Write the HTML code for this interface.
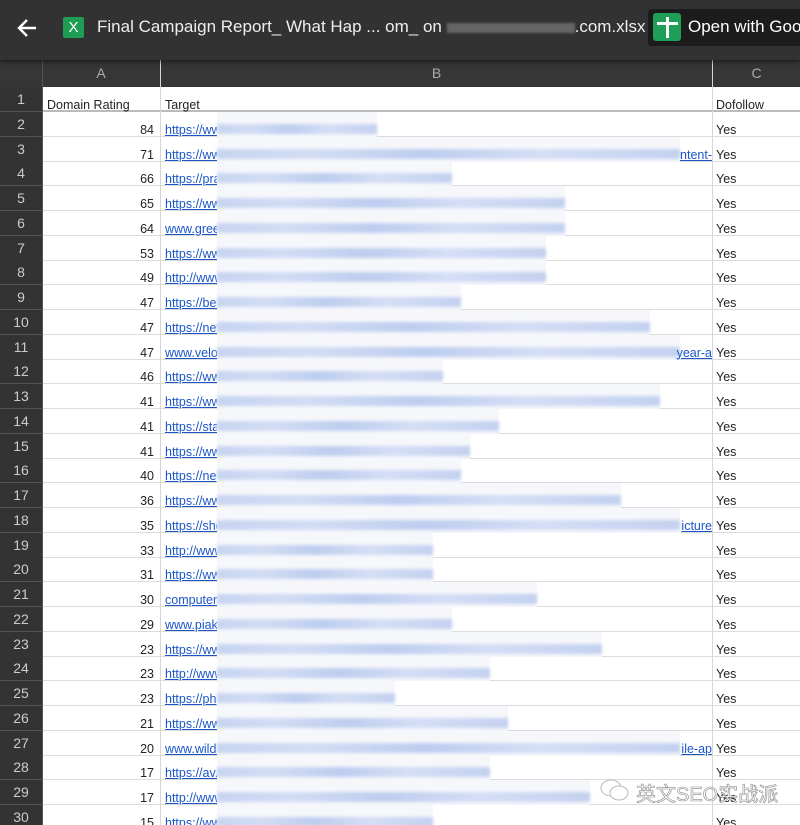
<!DOCTYPE html>
<html><head><meta charset="utf-8"><style>
*{margin:0;padding:0;box-sizing:border-box}
html,body{width:800px;height:825px;overflow:hidden}
body{background:#fff;font-family:"Liberation Sans",Arial,sans-serif;position:relative}
.top{position:absolute;left:0;top:0;width:800px;height:60px;background:#323232;box-shadow:0 2px 4px rgba(0,0,0,.5);z-index:5;overflow:hidden}
.hdr{position:absolute;left:0;top:60px;width:800px;height:27px;background:#363636;color:#aaa;font-size:14px}
.hdr div{position:absolute;top:0;line-height:27px;text-align:center}
.rn{position:absolute;left:0;top:87px;width:42px;height:738px;background:#333}
.v{position:absolute;top:60px;width:1px;height:765px;background:#d6d6d6}
.r{position:absolute;left:0;width:800px;height:25px;border-bottom:1px solid #dcdcdc;font-size:12.5px;color:#222}
.r .n{position:absolute;left:0;width:42px;height:25px;background:#333;color:#ccc;font-size:14px;text-align:center;line-height:24px;border-bottom:1px solid #555}
.r .a{position:absolute;left:42px;width:112px;text-align:right;top:6px;line-height:24px}
.r .l{position:absolute;left:165px;top:6px;line-height:24px;color:#1a56c8;text-decoration:underline}
.r .c{position:absolute;left:716px;top:6px;line-height:24px}
.r .t{position:absolute;top:6px;line-height:24px;color:#1a56c8;text-decoration:underline;right:88px}
.b{position:absolute;left:217px;top:0;height:25px;background:#f6f7fb}
.b i{position:absolute;left:0;right:0;top:12px;height:10px;background:linear-gradient(90deg,#c6d4f1,#d2ddf4 20%,#bdcdef 45%,#d4def5 70%,#c3d1f0);filter:blur(1.5px)}
</style></head><body>
<div class="top">
<svg style="position:absolute;left:16px;top:17px" width="22" height="22" viewBox="0 0 22 22"><path d="M20 11H3M11 3L3 11L11 19" stroke="#fff" stroke-width="2.4" fill="none"/></svg>
<div style="position:absolute;left:63px;top:17px;width:21px;height:21px;background:#1f9d55;border-radius:2px;color:#fff;font-size:15px;text-align:center;line-height:21px">X</div>
<div style="position:absolute;left:97px;top:16px;color:#eee;font-size:17px;line-height:22px;white-space:nowrap">Final Campaign Report_ What Hap ... om_ on <span style="display:inline-block;width:128px;height:10px;background:#888;vertical-align:middle;opacity:.6;filter:blur(1px)"></span>.com.xlsx</div>
<div style="position:absolute;left:648px;top:9px;width:152px;height:37px;background:#1c1c1c;border-radius:3px 0 0 3px;overflow:hidden">
<div style="position:absolute;left:5px;top:4px;width:28px;height:28px;background:#1e9e57;border-radius:3px"><div style="position:absolute;left:13px;top:4px;width:3px;height:21px;background:#fff"></div><div style="position:absolute;left:4px;top:9px;width:21px;height:3px;background:#fff"></div></div>
<div style="position:absolute;left:40px;top:8px;color:#fff;font-size:17px;white-space:nowrap">Open with Google Sheets</div></div>
</div>
<div class="hdr"><div style="left:42px;width:118px">A</div><div style="left:161px;width:551px">B</div><div style="left:713px;width:87px">C</div></div>
<div class="rn"></div>
<div class="r" style="top:87px;border-bottom:2px solid #bbb"><div class="n">1</div><div class="a" style="text-align:left;left:47px">Domain Rating</div><div class="l" style="color:#222;text-decoration:none">Target</div><div class="c">Dofollow</div></div>
<div class="r" style="top:111.75px"><div class="n">2</div><div class="a">84</div><div class="l">https://ww</div><div class="b" style="width:160px"><i></i></div><div class="c">Yes</div></div>
<div class="r" style="top:136.5px"><div class="n">3</div><div class="a">71</div><div class="l">https://ww</div><div class="b" style="width:463px"><i></i></div><div class="t">ntent-</div><div class="c">Yes</div></div>
<div class="r" style="top:161.25px"><div class="n">4</div><div class="a">66</div><div class="l">https://pra</div><div class="b" style="width:235px"><i></i></div><div class="c">Yes</div></div>
<div class="r" style="top:186px"><div class="n">5</div><div class="a">65</div><div class="l">https://ww</div><div class="b" style="width:348px"><i></i></div><div class="c">Yes</div></div>
<div class="r" style="top:210.75px"><div class="n">6</div><div class="a">64</div><div class="l">www.gree</div><div class="b" style="width:348px"><i></i></div><div class="c">Yes</div></div>
<div class="r" style="top:235.5px"><div class="n">7</div><div class="a">53</div><div class="l">https://ww</div><div class="b" style="width:329px"><i></i></div><div class="c">Yes</div></div>
<div class="r" style="top:260.25px"><div class="n">8</div><div class="a">49</div><div class="l">http://www</div><div class="b" style="width:329px"><i></i></div><div class="c">Yes</div></div>
<div class="r" style="top:285px"><div class="n">9</div><div class="a">47</div><div class="l">https://bea</div><div class="b" style="width:244px"><i></i></div><div class="c">Yes</div></div>
<div class="r" style="top:309.75px"><div class="n">10</div><div class="a">47</div><div class="l">https://nev</div><div class="b" style="width:433px"><i></i></div><div class="c">Yes</div></div>
<div class="r" style="top:334.5px"><div class="n">11</div><div class="a">47</div><div class="l">www.velo</div><div class="b" style="width:463px"><i></i></div><div class="t">year-a</div><div class="c">Yes</div></div>
<div class="r" style="top:359.25px"><div class="n">12</div><div class="a">46</div><div class="l">https://ww</div><div class="b" style="width:226px"><i></i></div><div class="c">Yes</div></div>
<div class="r" style="top:384px"><div class="n">13</div><div class="a">41</div><div class="l">https://ww</div><div class="b" style="width:443px"><i></i></div><div class="c">Yes</div></div>
<div class="r" style="top:408.75px"><div class="n">14</div><div class="a">41</div><div class="l">https://sta</div><div class="b" style="width:282px"><i></i></div><div class="c">Yes</div></div>
<div class="r" style="top:433.5px"><div class="n">15</div><div class="a">41</div><div class="l">https://ww</div><div class="b" style="width:253px"><i></i></div><div class="c">Yes</div></div>
<div class="r" style="top:458.25px"><div class="n">16</div><div class="a">40</div><div class="l">https://ne</div><div class="b" style="width:244px"><i></i></div><div class="c">Yes</div></div>
<div class="r" style="top:483px"><div class="n">17</div><div class="a">36</div><div class="l">https://ww</div><div class="b" style="width:404px"><i></i></div><div class="c">Yes</div></div>
<div class="r" style="top:507.75px"><div class="n">18</div><div class="a">35</div><div class="l">https://sho</div><div class="b" style="width:463px"><i></i></div><div class="t">icture</div><div class="c">Yes</div></div>
<div class="r" style="top:532.5px"><div class="n">19</div><div class="a">33</div><div class="l">http://www</div><div class="b" style="width:216px"><i></i></div><div class="c">Yes</div></div>
<div class="r" style="top:557.25px"><div class="n">20</div><div class="a">31</div><div class="l">https://ww</div><div class="b" style="width:216px"><i></i></div><div class="c">Yes</div></div>
<div class="r" style="top:582px"><div class="n">21</div><div class="a">30</div><div class="l">computer</div><div class="b" style="width:320px"><i></i></div><div class="c">Yes</div></div>
<div class="r" style="top:606.75px"><div class="n">22</div><div class="a">29</div><div class="l">www.piak</div><div class="b" style="width:235px"><i></i></div><div class="c">Yes</div></div>
<div class="r" style="top:631.5px"><div class="n">23</div><div class="a">23</div><div class="l">https://ww</div><div class="b" style="width:385px"><i></i></div><div class="c">Yes</div></div>
<div class="r" style="top:656.25px"><div class="n">24</div><div class="a">23</div><div class="l">http://www</div><div class="b" style="width:273px"><i></i></div><div class="c">Yes</div></div>
<div class="r" style="top:681px"><div class="n">25</div><div class="a">23</div><div class="l">https://ph</div><div class="b" style="width:178px"><i></i></div><div class="c">Yes</div></div>
<div class="r" style="top:705.75px"><div class="n">26</div><div class="a">21</div><div class="l">https://ww</div><div class="b" style="width:291px"><i></i></div><div class="c">Yes</div></div>
<div class="r" style="top:730.5px"><div class="n">27</div><div class="a">20</div><div class="l">www.wilds</div><div class="b" style="width:463px"><i></i></div><div class="t">ile-ap</div><div class="c">Yes</div></div>
<div class="r" style="top:755.25px"><div class="n">28</div><div class="a">17</div><div class="l">https://av.</div><div class="b" style="width:273px"><i></i></div><div class="c">Yes</div></div>
<div class="r" style="top:780px"><div class="n">29</div><div class="a">17</div><div class="l">http://www</div><div class="b" style="width:373px"><i></i></div><div class="c">Yes</div></div>
<div class="r" style="top:804.75px"><div class="n">30</div><div class="a">15</div><div class="l">https://ww</div><div class="b" style="width:216px"><i></i></div><div class="c">Yes</div></div>
<div class="v" style="left:42px;background:#555"></div>
<div class="v" style="left:160px"></div>
<div class="v" style="left:712px"></div>
<div style="position:absolute;left:600px;top:778px;width:30px;height:26px">
<svg width="30" height="26" viewBox="0 0 30 26"><ellipse cx="11" cy="10" rx="10" ry="8" fill="#fff" stroke="#bbb"/><ellipse cx="19" cy="15" rx="9" ry="7" fill="#fff" stroke="#bbb"/></svg></div>
<div style="position:absolute;left:636px;top:778px;font-family:'Liberation Sans','Noto Sans CJK SC',sans-serif;font-size:20px;color:#fff;-webkit-text-stroke:.6px #888;white-space:nowrap">英文SEO实战派</div>
</body></html>
